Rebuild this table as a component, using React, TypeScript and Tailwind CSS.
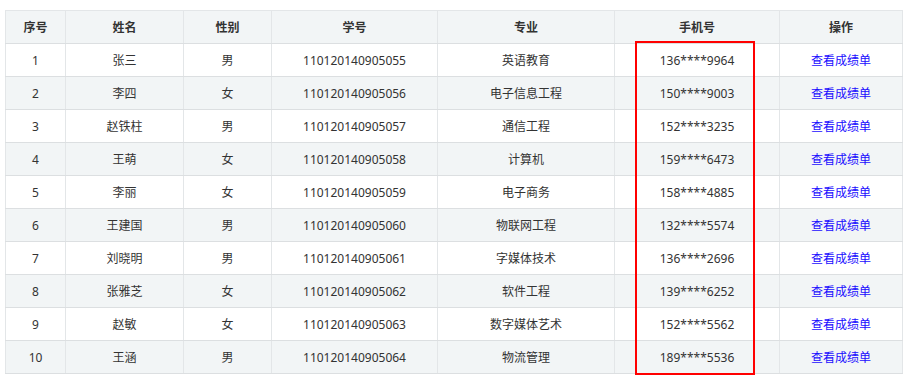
const STUDENTS = [
  { name: "张三", gender: "男", no: "110120140905055", major: "英语教育", phone: "136****9964" },
  { name: "李四", gender: "女", no: "110120140905056", major: "电子信息工程", phone: "150****9003" },
  { name: "赵铁柱", gender: "男", no: "110120140905057", major: "通信工程", phone: "152****3235" },
  { name: "王萌", gender: "女", no: "110120140905058", major: "计算机", phone: "159****6473" },
  { name: "李丽", gender: "女", no: "110120140905059", major: "电子商务", phone: "158****4885" },
  { name: "王建国", gender: "男", no: "110120140905060", major: "物联网工程", phone: "132****5574" },
  { name: "刘晓明", gender: "男", no: "110120140905061", major: "字媒体技术", phone: "136****2696" },
  { name: "张雅芝", gender: "女", no: "110120140905062", major: "软件工程", phone: "139****6252" },
  { name: "赵敏", gender: "女", no: "110120140905063", major: "数字媒体艺术", phone: "152****5562" },
  { name: "王涵", gender: "男", no: "110120140905064", major: "物流管理", phone: "189****5536" },
];

const COLS = ["序号", "姓名", "性别", "学号", "专业", "手机号", "操作"];
const WIDTHS = ["w-[60px]", "w-[118px]", "w-[88px]", "w-[166px]", "w-[177px]", "w-[165px]", "w-[123px]"];

export default function App() {
  return (
    <div className="w-[910px] h-[385px] bg-white pt-[10px] pl-[5px] font-['Noto_Sans','Noto_Sans_CJK_SC',sans-serif] text-[12px] text-[#333]">
      <div className="relative w-[897px]">
        <table className="w-[897px] table-fixed border-collapse border border-[#dcdfe1]">
          <thead>
            <tr className="h-[33px] bg-[#f2f5f6]">
              {COLS.map((c, i) => (
                <th key={c} className={`${WIDTHS[i]} border border-[#e3e6e8] border-b-[#dcdfe1] font-bold text-[#333] text-center p-0 pt-[1px]`}>
                  {c}
                </th>
              ))}
            </tr>
          </thead>
          <tbody>
            {STUDENTS.map((s, i) => (
              <tr key={s.no} className={`h-[33px] ${i % 2 === 1 ? "bg-[#f2f5f6]" : "bg-white"}`}>
                <td className="border border-[#e3e6e8] border-b-[#dcdfe1] text-center p-0 pt-[2px]">{i + 1}</td>
                <td className="border border-[#e3e6e8] border-b-[#dcdfe1] text-center p-0 pt-[2px]">{s.name}</td>
                <td className="border border-[#e3e6e8] border-b-[#dcdfe1] text-center p-0 pt-[2px]">{s.gender}</td>
                <td className="border border-[#e3e6e8] border-b-[#dcdfe1] text-center p-0 pt-[2px]">{s.no}</td>
                <td className="border border-[#e3e6e8] border-b-[#dcdfe1] text-center p-0 pt-[2px]">{s.major}</td>
                <td className="border border-[#e3e6e8] border-b-[#dcdfe1] text-center p-0 pt-[2px]">{s.phone}</td>
                <td className="border border-[#e3e6e8] border-b-[#dcdfe1] text-center p-0 pt-[2px]">
                  <a href="#" className="text-[#1a0dff]">查看成绩单</a>
                </td>
              </tr>
            ))}
          </tbody>
        </table>
        {/* highlight box over phone column */}
        <div className="absolute left-[630px] top-[31px] w-[120px] h-[334px] border-2 border-[#ff0000] pointer-events-none" />
      </div>
    </div>
  );
}
